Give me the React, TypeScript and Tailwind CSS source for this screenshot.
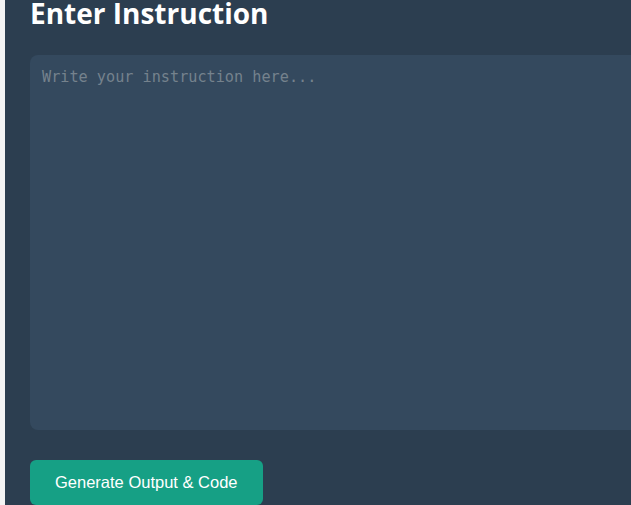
export default function App() {
  return (
    <div className="flex h-[505px] w-[631px] overflow-hidden bg-[#f4f4f4]">
      <div className="ml-[5px] w-[700px] shrink-0 bg-[#2c3e50] px-[25px]">
        <h2 className="mt-[-7px] font-['Open_Sans',sans-serif] text-[28px] font-bold leading-[40px] text-white">
          Enter Instruction
        </h2>
        <textarea
          placeholder="Write your instruction here..."
          className="mt-[22px] block h-[375px] w-full resize-none rounded-lg border-0 bg-[#34495e] px-[12px] py-[12px] font-['DejaVu_Sans_Mono',monospace] text-[15.2px] leading-[20px] text-white outline-none placeholder:text-[#75828d]"
        />
        <button className="mt-[30px] h-[45px] rounded-md bg-[#16a085] px-[25px] font-['Liberation_Sans',Arial,sans-serif] text-[16.5px] text-white">
          Generate Output &amp; Code
        </button>
      </div>
    </div>
  );
}
